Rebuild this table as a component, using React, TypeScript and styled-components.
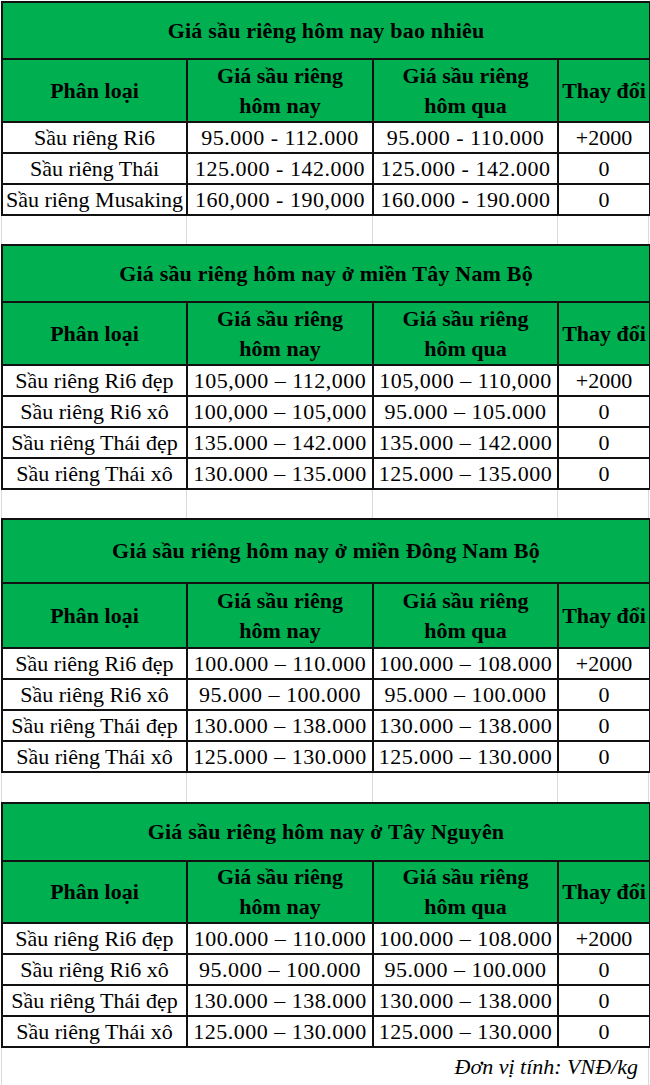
import styled, { createGlobalStyle } from "styled-components"

type Row = [string, string, string, string]

type Block = {
    title: string
    titleH: number
    headH: number
    gap: number
    rows: Row[]
}

const blocks: Block[] = [
    {
        title: "Giá sầu riêng hôm nay bao nhiêu",
        titleH: 57,
        headH: 63,
        gap: 28,
        rows: [
            ["Sầu riêng Ri6", "95.000 - 112.000", "95.000 - 110.000", "+2000"],
            ["Sầu riêng Thái", "125.000 - 142.000", "125.000 - 142.000", "0"],
            ["Sầu riêng Musaking", "160,000 - 190,000", "160.000 - 190.000", "0"],
        ],
    },
    {
        title: "Giá sầu riêng hôm nay ở miền Tây Nam Bộ",
        titleH: 57,
        headH: 63,
        gap: 28,
        rows: [
            ["Sầu riêng Ri6 đẹp", "105,000 – 112,000", "105,000 – 110,000", "+2000"],
            ["Sầu riêng Ri6 xô", "100,000 – 105,000", "95.000 – 105.000", "0"],
            ["Sầu riêng Thái đẹp", "135.000 – 142.000", "135.000 – 142.000", "0"],
            ["Sầu riêng Thái xô", "130.000 – 135.000", "125.000 – 135.000", "0"],
        ],
    },
    {
        title: "Giá sầu riêng hôm nay ở miền Đông Nam Bộ",
        titleH: 64,
        headH: 65,
        gap: 29,
        rows: [
            ["Sầu riêng Ri6 đẹp", "100.000 – 110.000", "100.000 – 108.000", "+2000"],
            ["Sầu riêng Ri6 xô", "95.000 – 100.000", "95.000 – 100.000", "0"],
            ["Sầu riêng Thái đẹp", "130.000 – 138.000", "130.000 – 138.000", "0"],
            ["Sầu riêng Thái xô", "125.000 – 130.000", "125.000 – 130.000", "0"],
        ],
    },
    {
        title: "Giá sầu riêng hôm nay ở Tây Nguyên",
        titleH: 58,
        headH: 60,
        gap: 0,
        rows: [
            ["Sầu riêng Ri6 đẹp", "100.000 – 110.000", "100.000 – 108.000", "+2000"],
            ["Sầu riêng Ri6 xô", "95.000 – 100.000", "95.000 – 100.000", "0"],
            ["Sầu riêng Thái đẹp", "130.000 – 138.000", "130.000 – 138.000", "0"],
            ["Sầu riêng Thái xô", "125.000 – 130.000", "125.000 – 130.000", "0"],
        ],
    },
]

const cols = [185, 186, 185, 92]

export default function App() {
    return (
        <>
            <GlobalStyle />
            <Sheet>
                {blocks.map((b, i) => (
                    <div key={i}>
                        <Table>
                            <colgroup>
                                {cols.map((w, j) => <col key={j} style={{ width: w }} />)}
                            </colgroup>
                            <tbody>
                                <tr style={{ height: b.titleH }}>
                                    <TitleCell colSpan={4}>{b.title}</TitleCell>
                                </tr>
                                <tr style={{ height: b.headH }}>
                                    <HeadCell>Phân loại</HeadCell>
                                    <HeadCell>Giá sầu riêng<br />hôm nay</HeadCell>
                                    <HeadCell>Giá sầu riêng<br />hôm qua</HeadCell>
                                    <HeadCell>Thay đổi</HeadCell>
                                </tr>
                                {b.rows.map((r, k) => (
                                    <DataRow key={k}>
                                        {r.map((c, m) => <Cell key={m} $num={m === 1 || m === 2}>{c}</Cell>)}
                                    </DataRow>
                                ))}
                            </tbody>
                        </Table>
                        {b.gap > 0 && (
                            <Spacer $h={b.gap}>
                                {cols.map((_, j) => <GridCol key={j} />)}
                            </Spacer>
                        )}
                    </div>
                ))}
                <Footer>Đơn vị tính: VNĐ/kg</Footer>
            </Sheet>
        </>
    )
}

const GlobalStyle = createGlobalStyle`
    body {
        margin: 0;
        background: #ffffff;
        color: #000;
        font-family: "Liberation Serif", "Times New Roman", serif;
    }
`

const Sheet = styled.div`
    width: 648px;
    margin: 1px 0 0 1px;
    font-family: "Liberation Serif", "Times New Roman", serif;
`

const Table = styled.table`
    width: 648px;
    table-layout: fixed;
    border-collapse: collapse;
    border: 2px solid #111;
    font-family: "Liberation Serif", "Times New Roman", serif;
`

const TitleCell = styled.th`
    background: #00b050;
    border: 2px solid #111;
    font-family: "Liberation Serif", "Times New Roman", serif;
    font-size: 22px;
    font-weight: 700;
    text-align: center;
    padding: 0;
    letter-spacing: 0.2px;
`

const HeadCell = styled.th`
    background: #00b050;
    border: 2px solid #111;
    font-family: "Liberation Serif", "Times New Roman", serif;
    font-size: 22px;
    font-weight: 700;
    line-height: 30px;
    text-align: center;
    padding: 0;
    white-space: nowrap;
`

const DataRow = styled.tr`
    height: 31px;
`

const Cell = styled.td<{ $num?: boolean }>`
    border: 2px solid #111;
    font-family: "Liberation Serif", "Times New Roman", serif;
    font-size: 22px;
    letter-spacing: ${p => (p.$num ? "0.5px" : "0")};
    text-align: center;
    padding: 0;
    white-space: nowrap;
    background: #fff;
`

const Spacer = styled.div<{ $h: number }>`
    display: grid;
    grid-template-columns: 185px 186px 185px 92px;
    height: ${p => p.$h}px;
`

const GridCol = styled.div`
    border-left: 1px solid #dadada;
    &:last-child {
        border-right: 1px solid #dadada;
    }
`

const Footer = styled.div`
    height: 38px;
    border-left: 1px solid #dadada;
    border-right: 1px solid #dadada;
    font-family: "Liberation Serif", "Times New Roman", serif;
    font-size: 22px;
    font-style: italic;
    text-align: right;
    padding-right: 10px;
    line-height: 38px;
`
